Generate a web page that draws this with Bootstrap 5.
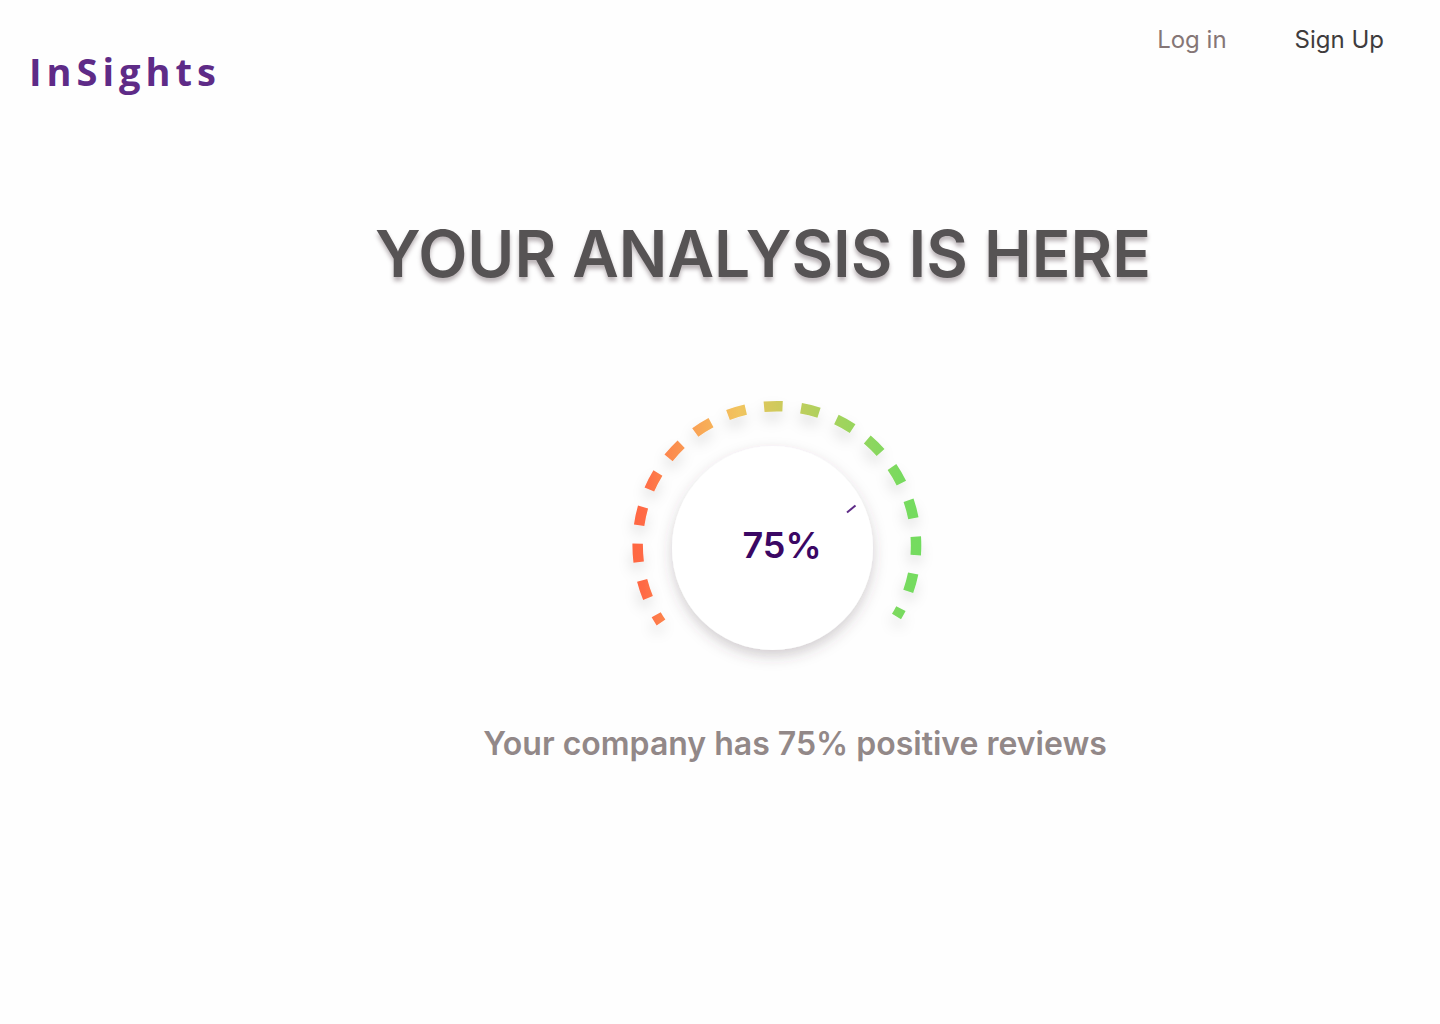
<!DOCTYPE html>
<html lang="en">
<head>
<meta charset="utf-8">
<meta name="viewport" content="width=device-width, initial-scale=1">
<title>InSights</title>
<link rel="stylesheet" href="https://cdn.jsdelivr.net/npm/bootstrap@5.3.0/dist/css/bootstrap.min.css">
<style>
body { background: #fefefe; font-family: Inter, sans-serif; }
.site-header { padding: 20px 56px 0 29px; }
.brand-name { margin-top: 23px; font: 700 38px/56px "Open Sans", sans-serif; letter-spacing: 5px; color: #5e2b87; }
.account-links { gap: 68px; font-size: 24px; line-height: 40px; }
.link-login { color: #857676; }
.link-signup { color: #3f3c3d; }
.headline { margin: 115px 0 0; padding-left: 86px; font-size: 64px; line-height: 80px; font-weight: 600; color: #565354; text-shadow: 0 4px 4px rgba(60, 40, 50, .35); }
.gauge-wrap { margin-top: 88px; padding-left: 124px; }
.gauge-value { font-size: 36px; font-weight: 600; fill: #3b0764; }
.summary { margin: 38px 0 0; padding-left: 150px; font-size: 32px; line-height: 48px; font-weight: 600; color: #928888; }
</style>
</head>
<body>
<header class="site-header d-flex justify-content-between align-items-start">
  <a class="brand-name text-decoration-none" href="#">InSights</a>
  <nav class="account-links d-flex" aria-label="Account">
    <a class="link-login text-decoration-none" href="#">Log in</a>
    <a class="link-signup text-decoration-none" href="#">Sign Up</a>
  </nav>
</header>
<main class="text-center">
  <h1 class="headline">YOUR ANALYSIS IS HERE</h1>
  <div class="gauge-wrap">
    <svg class="d-block mx-auto" width="340" height="300" viewBox="612 382 340 300" role="img" aria-label="75% positive">
      <defs>
        <linearGradient id="scale" gradientUnits="userSpaceOnUse" x1="632" y1="0" x2="922" y2="0">
          <stop offset="0" stop-color="#ff6642"/>
          <stop offset=".04" stop-color="#ff6a45"/>
          <stop offset=".13" stop-color="#fc8a4e"/>
          <stop offset=".25" stop-color="#f8ab57"/>
          <stop offset=".37" stop-color="#f1c45e"/>
          <stop offset=".48" stop-color="#d4c95c"/>
          <stop offset=".61" stop-color="#b7cf5d"/>
          <stop offset=".73" stop-color="#9fd45d"/>
          <stop offset=".85" stop-color="#88d75e"/>
          <stop offset=".93" stop-color="#78da5f"/>
          <stop offset="1" stop-color="#72dc5f"/>
        </linearGradient>
        <filter id="arcShadow" filterUnits="userSpaceOnUse" x="612" y="382" width="340" height="300">
          <feDropShadow dx="-1" dy="8" stdDeviation="7" flood-color="#000" flood-opacity=".12"/>
        </filter>
        <filter id="dialShadow" filterUnits="userSpaceOnUse" x="612" y="382" width="340" height="300">
          <feDropShadow dx="0" dy="6" stdDeviation="7" flood-color="#504045" flood-opacity=".25"/>
        </filter>
      </defs>
      <path d="M661 622.500A139.200 139.200 0 1 1 896.500 616.500" fill="none" stroke="url(#scale)" stroke-width="10.500" pathLength="64" stroke-dasharray="2 2" stroke-dashoffset="1" filter="url(#arcShadow)"/>
      <ellipse cx="772.500" cy="548" rx="100.500" ry="102" fill="#fff" filter="url(#dialShadow)"/>
      <path d="M847 512.500L855.500 505.500" stroke="#5e2b87" stroke-width="2"/>
      <text class="gauge-value" x="782" y="558" text-anchor="middle">75%</text>
    </svg>
  </div>
  <p class="summary">Your company has 75% positive reviews</p>
</main>
<script src="https://cdn.jsdelivr.net/npm/bootstrap@5.3.0/dist/js/bootstrap.bundle.min.js"></script>
</body>
</html>
